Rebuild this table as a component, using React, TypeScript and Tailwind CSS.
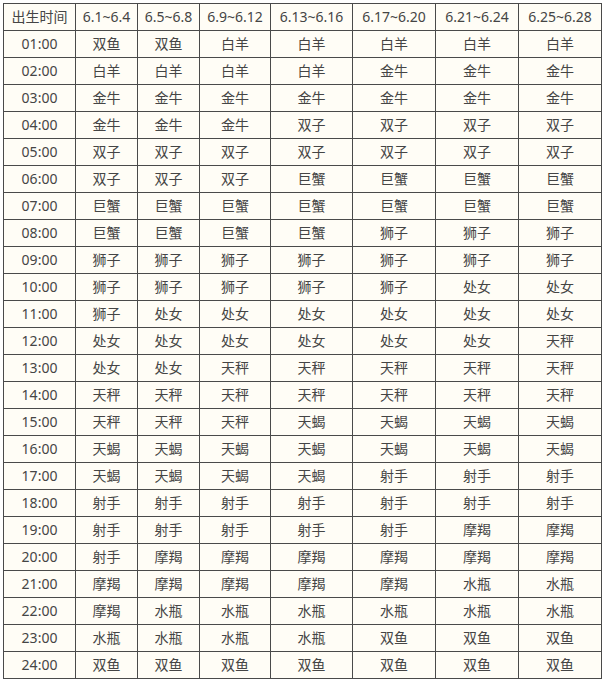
import React from "react";

const headers = ["出生时间", "6.1~6.4", "6.5~6.8", "6.9~6.12", "6.13~6.16", "6.17~6.20", "6.21~6.24", "6.25~6.28"];
const widths = ["w-[72px]", "w-[62px]", "w-[62px]", "w-[71px]", "w-[82px]", "w-[83px]", "w-[83px]", "w-[83px]"];

const rows: string[][] = [
  ["双鱼", "双鱼", "白羊", "白羊", "白羊", "白羊", "白羊"],
  ["白羊", "白羊", "白羊", "白羊", "金牛", "金牛", "金牛"],
  ["金牛", "金牛", "金牛", "金牛", "金牛", "金牛", "金牛"],
  ["金牛", "金牛", "金牛", "双子", "双子", "双子", "双子"],
  ["双子", "双子", "双子", "双子", "双子", "双子", "双子"],
  ["双子", "双子", "双子", "巨蟹", "巨蟹", "巨蟹", "巨蟹"],
  ["巨蟹", "巨蟹", "巨蟹", "巨蟹", "巨蟹", "巨蟹", "巨蟹"],
  ["巨蟹", "巨蟹", "巨蟹", "巨蟹", "狮子", "狮子", "狮子"],
  ["狮子", "狮子", "狮子", "狮子", "狮子", "狮子", "狮子"],
  ["狮子", "狮子", "狮子", "狮子", "狮子", "处女", "处女"],
  ["狮子", "处女", "处女", "处女", "处女", "处女", "处女"],
  ["处女", "处女", "处女", "处女", "处女", "处女", "天秤"],
  ["处女", "处女", "天秤", "天秤", "天秤", "天秤", "天秤"],
  ["天秤", "天秤", "天秤", "天秤", "天秤", "天秤", "天秤"],
  ["天秤", "天秤", "天秤", "天蝎", "天蝎", "天蝎", "天蝎"],
  ["天蝎", "天蝎", "天蝎", "天蝎", "天蝎", "天蝎", "天蝎"],
  ["天蝎", "天蝎", "天蝎", "天蝎", "射手", "射手", "射手"],
  ["射手", "射手", "射手", "射手", "射手", "射手", "射手"],
  ["射手", "射手", "射手", "射手", "射手", "摩羯", "摩羯"],
  ["射手", "摩羯", "摩羯", "摩羯", "摩羯", "摩羯", "摩羯"],
  ["摩羯", "摩羯", "摩羯", "摩羯", "摩羯", "水瓶", "水瓶"],
  ["摩羯", "水瓶", "水瓶", "水瓶", "水瓶", "水瓶", "水瓶"],
  ["水瓶", "水瓶", "水瓶", "水瓶", "双鱼", "双鱼", "双鱼"],
  ["双鱼", "双鱼", "双鱼", "双鱼", "双鱼", "双鱼", "双鱼"],
];

const cell = "border border-[#4a4a4a] h-[27px] p-0 text-center align-middle font-normal";

export default function App() {
  return (
    <div className="min-h-screen bg-white pt-[3px] pl-[3px] font-['Noto_Sans','Noto_Sans_CJK_SC',sans-serif] text-[14px] leading-none text-[#454545]">
      <table className="table-fixed border-collapse w-[599px] bg-[#fffdf6]">
        <colgroup>
          {widths.map((w, i) => (
            <col key={i} className={w} />
          ))}
        </colgroup>
        <thead>
          <tr>
            {headers.map((h) => (
              <th key={h} className={cell}>
                {h}
              </th>
            ))}
          </tr>
        </thead>
        <tbody>
          {rows.map((r, i) => (
            <tr key={i}>
              <td className={cell}>{String(i + 1).padStart(2, "0")}:00</td>
              {r.map((s, j) => (
                <td key={j} className={cell}>
                  {s}
                </td>
              ))}
            </tr>
          ))}
        </tbody>
      </table>
    </div>
  );
}
